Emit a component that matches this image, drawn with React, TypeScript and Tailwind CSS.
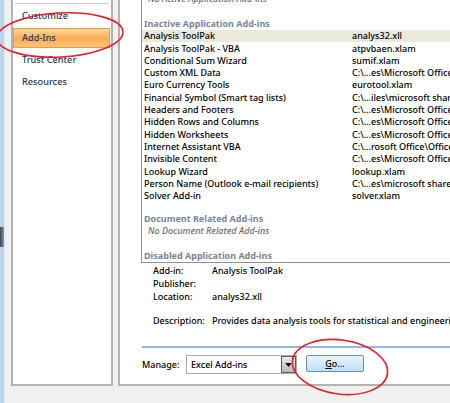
const inactive: [string, string][] = [
  ["Analysis ToolPak", "analys32.xll"],
  ["Analysis ToolPak - VBA", "atpvbaen.xlam"],
  ["Conditional Sum Wizard", "sumif.xlam"],
  ["Custom XML Data", "C:\\...es\\Microsoft Office\\Office12\\OFFRHD.DLL"],
  ["Euro Currency Tools", "eurotool.xlam"],
  ["Financial Symbol (Smart tag lists)", "C:\\...iles\\microsoft shared\\Smart Tag\\MOFL.DLL"],
  ["Headers and Footers", "C:\\...es\\Microsoft Office\\Office12\\OFFRHD.DLL"],
  ["Hidden Rows and Columns", "C:\\...es\\Microsoft Office\\Office12\\OFFRHD.DLL"],
  ["Hidden Worksheets", "C:\\...es\\Microsoft Office\\Office12\\OFFRHD.DLL"],
  ["Internet Assistant VBA", "C:\\...rosoft Office\\Office12\\Library\\HTML.XLAM"],
  ["Invisible Content", "C:\\...es\\Microsoft Office\\Office12\\OFFRHD.DLL"],
  ["Lookup Wizard", "lookup.xlam"],
  ["Person Name (Outlook e-mail recipients)", "C:\\...es\\microsoft shared\\Smart Tag\\FNAME.DLL"],
  ["Solver Add-in", "solver.xlam"],
];

const nav = ["Customize", "Add-Ins", "Trust Center", "Resources"];

function Row({ name, loc, active }: { name: string; loc: string; active?: boolean }) {
  return (
    <div className={`flex h-[12.3px] items-center whitespace-nowrap pl-[2px] ${active ? "bg-[#ebe8dc]" : ""}`}>
      <span className="w-[208px] shrink-0 overflow-hidden">{name}</span>
      <span>{loc}</span>
    </div>
  );
}

function Heading({ children }: { children: string }) {
  return (
    <div className="flex h-[12.3px] items-center whitespace-nowrap pl-[2px] font-bold text-[#7a8596]">
      {children}
    </div>
  );
}

function Detail({ label, value }: { label: string; value?: string }) {
  return (
    <div className="flex h-[13px] items-center">
      <span className="w-[59px] shrink-0">{label}</span>
      {value && <span>{value}</span>}
    </div>
  );
}

export default function App() {
  return (
    <div
      className="relative flex h-[403px] w-[450px] overflow-hidden bg-[#f0f0f0] text-[9px] font-medium text-black"
      style={{ fontFamily: '"Noto Sans", "DejaVu Sans", sans-serif' }}
    >
      {/* window frame edge */}
      <div className="flex h-full w-[5px] shrink-0 flex-col border-r border-r-[#dde8f5] bg-[#bcd3ee]">
        <div className="h-[227px]" />
        <div className="h-[20px] bg-gradient-to-r from-[#3d4650] to-[#8a97a6]" />
      </div>

      <div className="flex h-[386px] shrink-0 gap-[5px] pl-[6px]">
        {/* left navigation */}
        <nav className="flex w-[102px] shrink-0 flex-col gap-[2px] border-x-2 border-b-2 border-[#b2b2b2] bg-white">
          <div className="mx-[2px] mt-[3px] h-px bg-[#c9c9c9]" />
          {nav.map((item) =>
            item === "Add-Ins" ? (
              <div
                key={item}
                className="mr-px flex h-[20px] items-center border border-[#e4a23e] bg-gradient-to-b from-[#fdd9a0] via-[#fbad52] to-[#fcc27a] pl-[8px] text-[9.2px] text-[#1e395b]"
              >
                {item}
              </div>
            ) : (
              <div key={item} className="flex h-[20px] items-center pl-[9px] text-[9.2px] text-[#1e395b]">
                {item}
              </div>
            ),
          )}
        </nav>

        {/* right content */}
        <section className="flex w-[360px] shrink-0 flex-col border-b-2 border-l-2 border-[#b2b2b2] bg-white pl-[21px]">
          <div className="-mt-[20px] flex h-[283px] shrink-0 flex-col overflow-hidden border border-[#8c929a]">
            <div className="h-[12px] shrink-0" />
            <div className="flex h-[12.3px] items-center whitespace-nowrap pl-[6px] italic text-[#6b6b6b]">
              No Active Application Add-ins
            </div>
            <div className="h-[12.3px] shrink-0" />
            <Heading>Inactive Application Add-ins</Heading>
            {inactive.map(([n, l], i) => (
              <Row key={n} name={n} loc={l} active={i === 0} />
            ))}
            <div className="h-[10.7px] shrink-0" />
            <Heading>Document Related Add-ins</Heading>
            <div className="flex h-[12.3px] items-center whitespace-nowrap pl-[6px] italic text-[#6b6b6b]">
              No Document Related Add-ins
            </div>
            <div className="h-[12.4px] shrink-0" />
            <Heading>Disabled Application Add-ins</Heading>
          </div>

          <div className="mt-[1.5px] flex flex-col whitespace-nowrap pl-[12px]">
            <Detail label="Add-in:" value="Analysis ToolPak" />
            <Detail label="Publisher:" />
            <Detail label="Location:" value="analys32.xll" />
            <div className="h-[11px]" />
            <Detail label="Description:" value="Provides data analysis tools for statistical and engineering analysis" />
          </div>

          <div className="ml-px mt-[18px] h-[2px] shrink-0 bg-[#98b6e2]" />

          <div className="mt-[7.5px] flex h-[19px] items-start whitespace-nowrap">
            <span className="flex h-[19px] w-[45px] items-center pl-px">Manage:</span>
            <div className="flex h-[19px] w-[111px] items-stretch border border-[#a7abb0] bg-white">
              <span className="flex flex-1 items-center pl-[4px]">Excel Add-ins</span>
              <span className="flex w-[15px] items-center justify-center border border-[#5d5d5d] bg-gradient-to-b from-[#e9e9e9] to-[#b9b9b9]">
                <svg width="7" height="4" viewBox="0 0 7 4">
                  <path d="M0 0h7L3.5 4z" fill="#111" />
                </svg>
              </span>
            </div>
            <button className="ml-[9px] flex h-[17px] w-[58px] items-center justify-center rounded-[2px] border border-[#6f8fb1] bg-gradient-to-b from-[#eaf5fd] to-[#bddff7] text-[9px] text-black">
              <span>
                <span className="underline">G</span>o...
              </span>
            </button>
          </div>
        </section>
      </div>

      {/* red annotation ellipses */}
      <svg className="pointer-events-none absolute left-0 top-0" width="450" height="403" viewBox="0 0 450 403">
        <ellipse cx="60" cy="35" rx="63" ry="22" fill="none" stroke="#e3202a" strokeWidth="1.6" transform="rotate(-3 60 35)" />
        <ellipse cx="340" cy="367" rx="48" ry="27" fill="none" stroke="#e3202a" strokeWidth="1.6" transform="rotate(8 340 367)" />
      </svg>
    </div>
  );
}
